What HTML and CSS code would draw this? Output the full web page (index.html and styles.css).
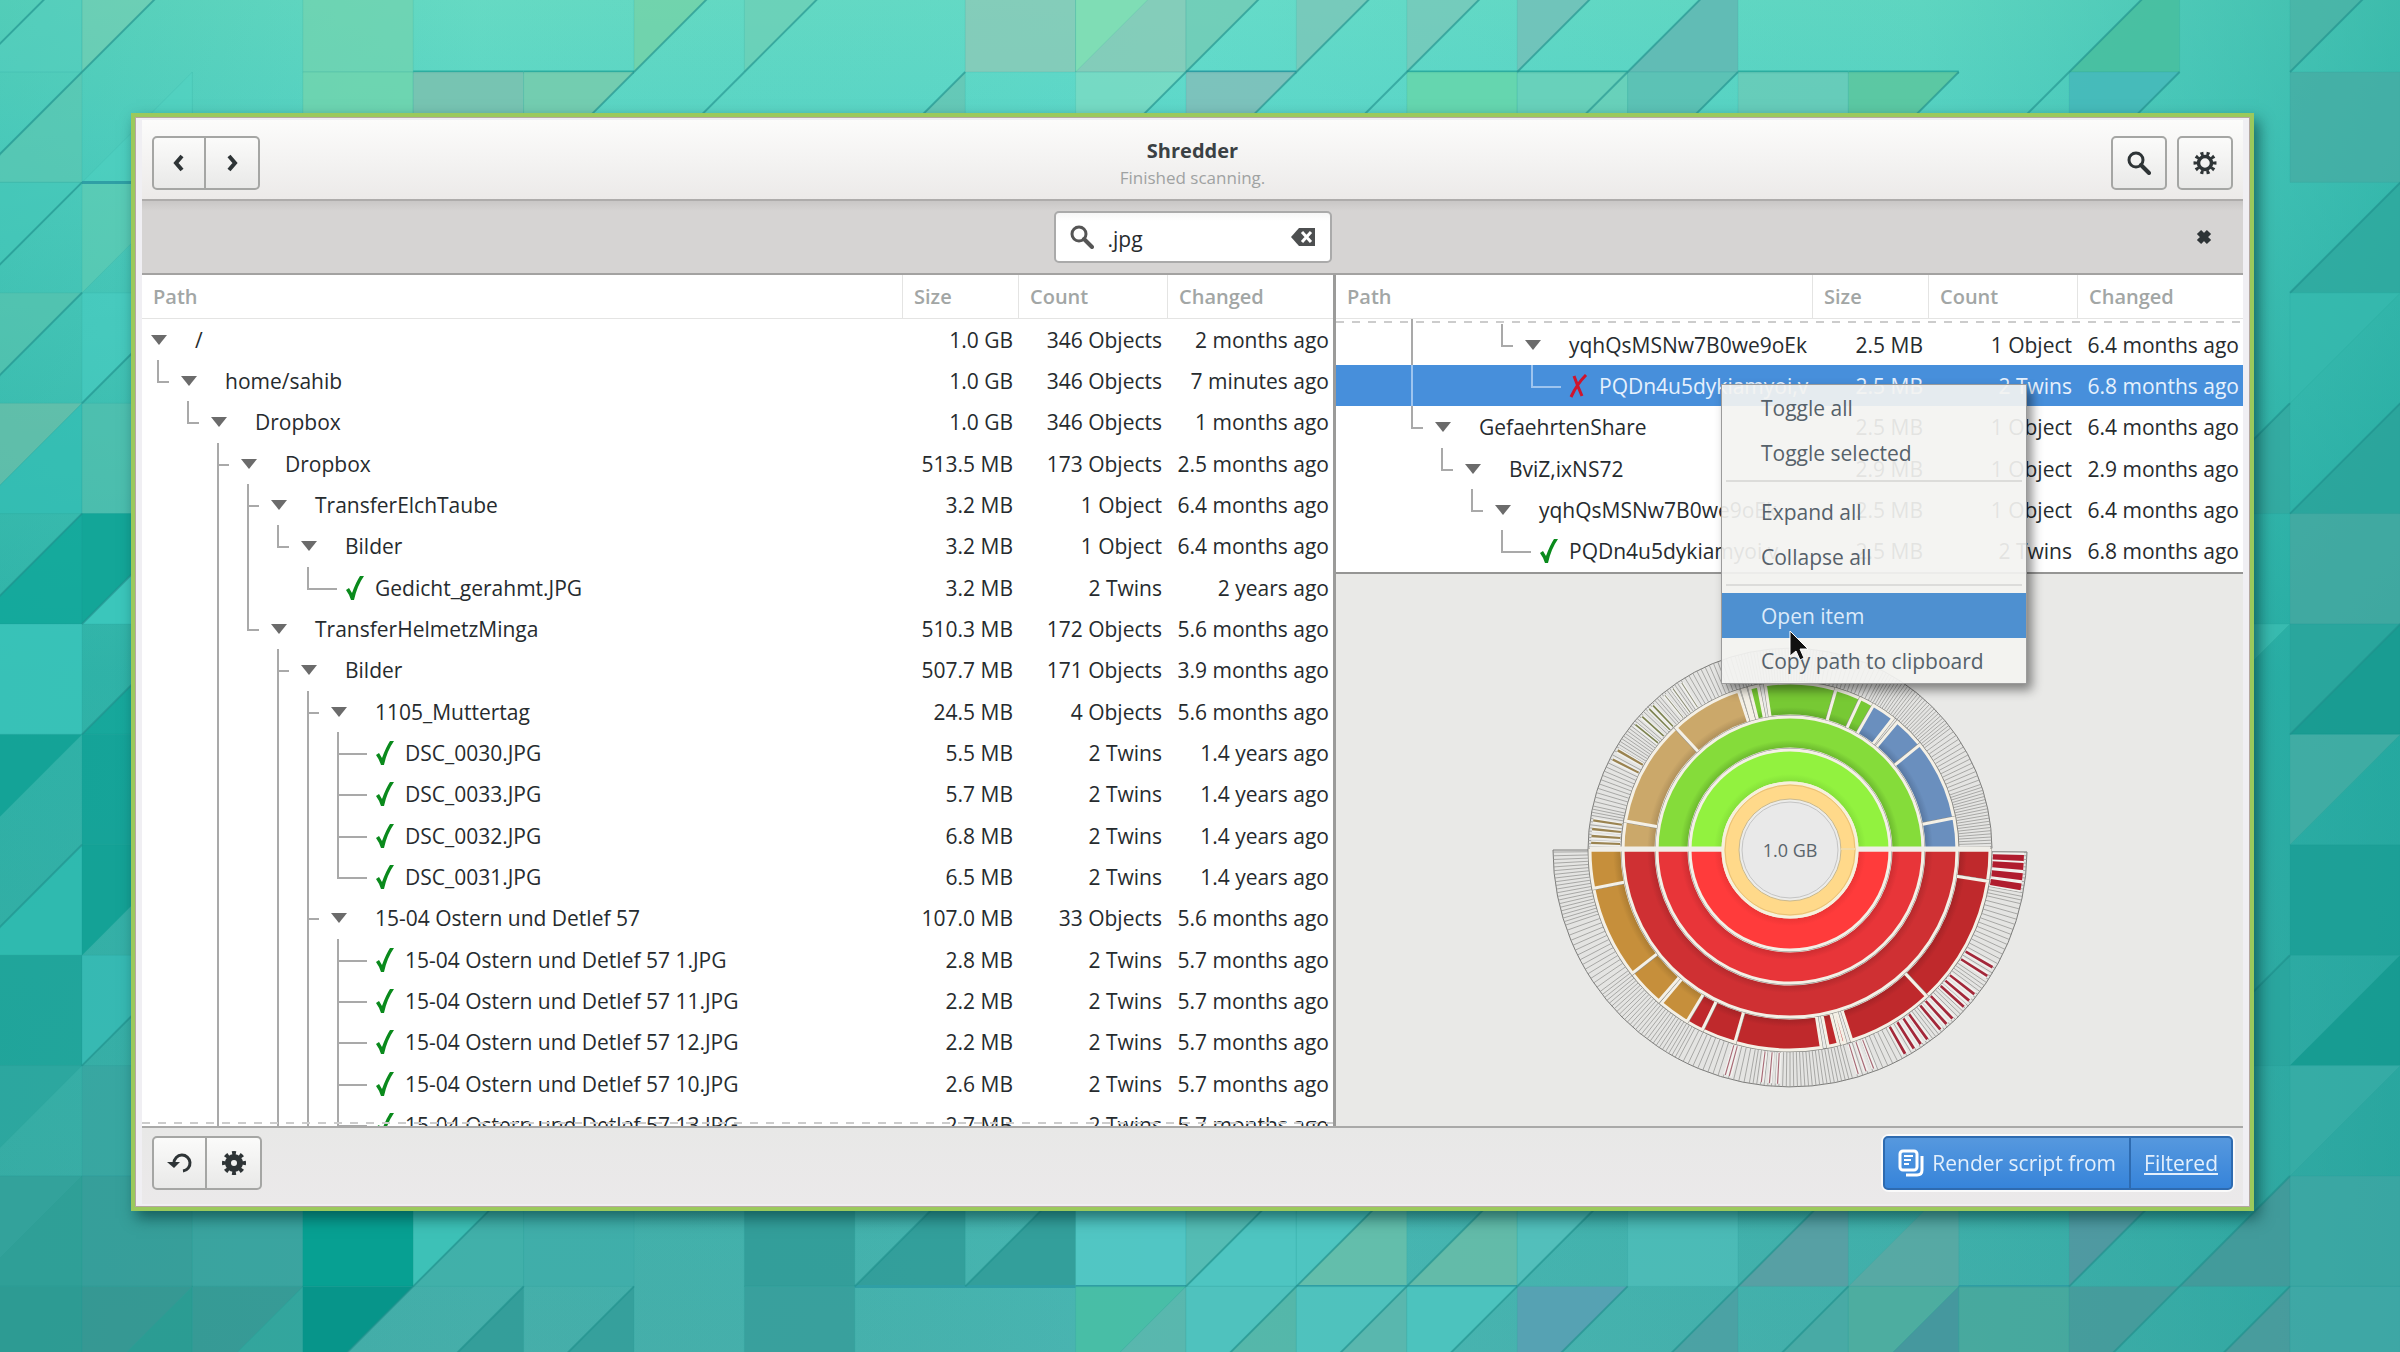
FILE: index.html
```html
<!DOCTYPE html>
<html lang="en">
<head>
<meta charset="UTF-8" />
<meta name="viewport" content="width=device-width, initial-scale=1" />
<title>Shredder</title>
<link rel="stylesheet" href="styles.css">
</head>
<body>

<svg class="wallpaper" id="wallpaper" viewBox="0 0 2400 1352" preserveAspectRatio="xMidYMid slice" aria-hidden="true">
  <defs>
    <linearGradient id="wallBase" x1="0" y1="0" x2="0" y2="1">
      <stop offset="0" stop-color="#6addc6"/>
      <stop offset="0.1" stop-color="#5ed8c8"/>
      <stop offset="0.5" stop-color="#38b8ae"/>
      <stop offset="1" stop-color="#49afab"/>
    </linearGradient>
    <linearGradient id="wallSide" x1="0" y1="0" x2="1" y2="0">
      <stop offset="0" stop-color="#0d9c8e" stop-opacity="0.25"/>
      <stop offset="0.2" stop-color="#0d9c8e" stop-opacity="0.05"/>
      <stop offset="0.5" stop-color="#55d5d5" stop-opacity="0.2"/>
      <stop offset="0.8" stop-color="#1aa8a0" stop-opacity="0.15"/>
      <stop offset="1" stop-color="#109a92" stop-opacity="0.5"/>
    </linearGradient>
  </defs>
  <rect width="2400" height="1352" fill="url(#wallBase)"/>
  <rect width="2400" height="1352" fill="url(#wallSide)"/>
  <g id="tiles"></g>
</svg>

<main class="window">
  <header class="titlebar">
    <div class="linked">
      <button class="btn" aria-label="Back">
        <svg width="24" height="24" viewBox="0 0 24 24"><path d="M15 5 L9 12 L15 19" fill="none" stroke="#2e3436" stroke-width="4"/></svg>
      </button>
      <button class="btn" aria-label="Forward">
        <svg width="24" height="24" viewBox="0 0 24 24"><path d="M9 5 L15 12 L9 19" fill="none" stroke="#2e3436" stroke-width="4"/></svg>
      </button>
    </div>
    <div class="title">
      <h1>Shredder</h1>
      <p>Finished scanning.</p>
    </div>
    <div class="tools">
      <button class="btn" aria-label="Search">
        <svg width="24" height="24" viewBox="0 0 24 24"><circle cx="9" cy="9" r="7" fill="none" stroke="#2e3436" stroke-width="3"/><path d="M14 14 L22 22" stroke="#2e3436" stroke-width="4" stroke-linecap="round"/></svg>
      </button>
      <button class="btn" aria-label="Settings">
        <svg width="24" height="24" viewBox="0 0 24 24"><circle cx="12" cy="12" r="6.5" fill="none" stroke="#2e3436" stroke-width="3.5"/><circle cx="12" cy="12" r="9.5" fill="none" stroke="#2e3436" stroke-width="4" pathLength="120" stroke-dasharray="6 6" stroke-dashoffset="3"/></svg>
      </button>
    </div>
  </header>

  <div class="searchbar">
    <div class="entry">
      <svg width="24" height="24" viewBox="0 0 24 24"><circle cx="9" cy="9" r="7" fill="none" stroke="#555" stroke-width="3"/><path d="M14 14 L22 22" stroke="#555" stroke-width="4" stroke-linecap="round"/></svg>
      <input type="text" value=".jpg" aria-label="Filter">
      <button class="clear" aria-label="Clear">
        <svg width="26" height="20" viewBox="0 0 26 20"><path d="M9 1 H25 V19 H9 L1 10 Z" fill="#4d4f50"/><path d="M12 5 L21 15 M21 5 L12 15" stroke="#fff" stroke-width="3"/></svg>
      </button>
    </div>
    <button class="close" aria-label="Close search">
      <svg width="18" height="18" viewBox="0 0 18 18"><path d="M4 4 L14 14 M14 4 L4 14" stroke="#2e3436" stroke-width="6"/></svg>
    </button>
  </div>

  <div class="panes">
    <section class="pane pane-left">
      <table class="tree">
        <colgroup><col><col class="col-size"><col class="col-count"><col class="col-changed"></colgroup>
        <thead><tr><th>Path</th><th>Size</th><th>Count</th><th>Changed</th></tr></thead>
        <tbody id="files"></tbody>
      </table>
    </section>

    <section class="pane pane-right">
      <div class="twins">
        <table class="tree">
          <colgroup><col><col class="col-size"><col class="col-count"><col class="col-changed"></colgroup>
          <thead><tr><th>Path</th><th>Size</th><th>Count</th><th>Changed</th></tr></thead>
          <tbody class="scrolled"><tr><td colspan="4"><div class="path"><i class="g"></i><i class="g"></i><i class="g v"></i></div></td></tr></tbody>
          <tbody id="twins"></tbody>
        </table>
      </div>
      <div class="chart">
        <svg id="chart" width="480" height="480" viewBox="-240 -240 480 480" role="img" aria-label="Disk usage"></svg>
      </div>

      <div class="menu" role="menu">
        <button role="menuitem">Toggle all</button>
        <button role="menuitem">Toggle selected</button>
        <hr>
        <button role="menuitem">Expand all</button>
        <button role="menuitem">Collapse all</button>
        <hr>
        <button role="menuitem" class="active">Open item</button>
        <button role="menuitem">Copy path to clipboard</button>
        <svg class="cursor" width="22" height="32" viewBox="0 0 22 32"><path d="M1 1 V26 L7 21 L11 30 L15 28 L11 19 L19 19 Z" fill="#111" stroke="#fff" stroke-width="1"/></svg>
      </div>
    </section>
  </div>

  <footer class="actionbar">
    <div class="linked">
      <button class="btn" aria-label="Rescan">
        <svg width="26" height="24" viewBox="0 0 26 24"><path d="M7 12 A8 8 0 1 1 16 20" fill="none" stroke="#2e3436" stroke-width="3"/><path d="M0 11 H13 L7 17 Z" fill="#2e3436"/></svg>
      </button>
      <button class="btn" aria-label="Options">
        <svg width="24" height="24" viewBox="0 0 24 24"><circle cx="12" cy="12" r="6" fill="none" stroke="#2e3436" stroke-width="6"/><circle cx="12" cy="12" r="10" fill="none" stroke="#2e3436" stroke-width="4" pathLength="80" stroke-dasharray="5 5" stroke-dashoffset="2.5"/></svg>
      </button>
    </div>
    <div class="linked suggested">
      <button class="btn">
        <svg width="26" height="28" viewBox="0 0 26 28"><path d="M8 26 H19 Q24 26 24 21 V7" fill="none" stroke="#fff" stroke-width="3"/><rect x="2" y="2" width="17" height="19" rx="3" fill="none" stroke="#fff" stroke-width="3"/><path d="M6 7 H15 M6 11 H13 M6 15 H11" stroke="#fff" stroke-width="2"/></svg>
        Render script from
      </button>
      <button class="btn"><u>Filtered</u></button>
    </div>
  </footer>
</main>

<script src="script.js"></script>
</body>
</html>
```
FILE: styles.css
```css
* {
  box-sizing: border-box;
}
body {
  margin: 0;
  height: 100vh;
  padding: 113px 146px 141px 131px;
  display: flex;
  font-family: "Open Sans", "Noto Sans", sans-serif;
  font-size: 21px;
  line-height: 28px;
  color: #262b2e;
  background: #45b8b0;
}
button, input {
  font: inherit;
  color: inherit;
}
svg {
  display: block;
}
.wallpaper {
  position: fixed;
  inset: 0;
  width: 100%;
  height: 100%;
  z-index: -1;
}

/* window frame */
.window {
  flex: 1;
  min-width: 0;
  display: flex;
  flex-direction: column;
  padding: 3px 7px;
  border: 4px solid #9bc95c;
  background: #f0eff3;
  box-shadow: inset 0 0 0 1px #b5a7a0, 5px 7px 14px rgba(0, 50, 50, 0.6);
}
.titlebar {
  height: 81px;
  display: grid;
  grid-template-columns: 1fr auto 1fr;
  align-items: center;
  padding: 6px 10px 0;
  border-bottom: 2px solid #aeacab;
  background: linear-gradient(#fcfcfb, #eceae9);
}
.title {
  padding-top: 2px;
  text-align: center;
}
.title h1 {
  margin: 0;
  font-size: 20px;
  line-height: 28px;
  color: #3b4144;
}
.title p {
  margin: 0;
  font-size: 17px;
  line-height: 26px;
  color: #9fa2a2;
}
.tools {
  display: flex;
  justify-content: flex-end;
  gap: 10px;
}
.tools .btn {
  width: 56px;
}

/* buttons */
.btn {
  width: 54px;
  height: 54px;
  display: flex;
  align-items: center;
  justify-content: center;
  gap: 8px;
  padding: 0;
  border: 2px solid #a5a6a4;
  border-radius: 5px;
  background: linear-gradient(#fbfbfa, #e9e9e8);
}
.linked {
  display: flex;
}
.linked .btn:first-child {
  border-radius: 5px 0 0 5px;
}
.linked .btn:last-child {
  border-radius: 0 5px 5px 0;
  border-left: 0;
}
.actionbar .btn {
  width: 55px;
}
.suggested {
  border-radius: 6px;
  box-shadow: 0 0 0 2px #fafafa;
}
.suggested .btn {
  width: auto;
  padding: 0 13px;
  border-color: #2e6bb0;
  color: #e3effc;
  background: linear-gradient(#5698de, #3684da);
}

/* search */
.searchbar {
  height: 74px;
  display: grid;
  grid-template-columns: 1fr 278px 1fr;
  align-items: center;
  padding: 0 30px;
  border-bottom: 2px solid #a3a2a1;
  background: linear-gradient(#c9c7c6, #d6d4d3 10px);
}
.entry {
  grid-column: 2;
  height: 52px;
  display: flex;
  align-items: center;
  gap: 12px;
  padding: 0 14px;
  border: 2px solid #aaa;
  border-radius: 5px;
  background: linear-gradient(#f6f6f6, #fff 8px);
}
.entry input {
  flex: 1;
  min-width: 0;
  padding: 4px 0 0 2px;
  border: 0;
  outline: 0;
  background: none;
}
.clear, .close {
  padding: 0;
  border: 0;
  background: none;
}
.close {
  justify-self: end;
}

/* panes */
.panes {
  flex: 1;
  min-height: 0;
  display: grid;
  grid-template-columns: 1191fr 910fr;
  grid-template-rows: minmax(0, 1fr);
}
.pane {
  position: relative;
  min-width: 0;
}
.pane-left {
  overflow: hidden;
  background: #fff;
}
.pane-left::after {
  content: "";
  position: absolute;
  left: 0;
  right: 0;
  bottom: 2px;
  height: 2px;
  background: repeating-linear-gradient(90deg, #ccc 0 8px, transparent 8px 16px);
}
.pane-right {
  display: flex;
  flex-direction: column;
  border-left: 3px solid #9b9b9a;
  background: #e9e9e7;
}
.twins {
  border-bottom: 2px solid #959594;
  background: #fff;
}
.chart {
  flex: 1;
  min-height: 0;
  display: flex;
  align-items: center;
  justify-content: center;
}

/* tree tables */
.tree {
  width: 100%;
  table-layout: fixed;
  border-collapse: separate;
  border-spacing: 0;
}
.col-size {
  width: 116px;
}
.col-count {
  width: 149px;
}
.col-changed {
  width: 165px;
}
.tree th {
  height: 44px;
  padding: 0 11px;
  text-align: left;
  font-size: 20px;
  font-weight: 600;
  color: #a2a6a5;
  border-bottom: 1px solid #e4e4e3;
  border-right: 1px solid #e4e4e3;
}
.tree th:last-child {
  border-right: 0;
}
.tree td {
  height: 41px;
  padding: 0 6px 0 0;
  text-align: right;
  white-space: nowrap;
  overflow: hidden;
}
.tree tr:nth-child(3n) td {
  height: 42px;
}
.tree td:first-child {
  padding: 0 2px 0 1px;
}
.tree td:last-child {
  padding-right: 4px;
}
.path {
  height: 41px;
  display: flex;
  align-items: center;
  overflow: hidden;
}
.tree tr:nth-child(3n) .path {
  height: 42px;
}
.scrolled td, .scrolled .path {
  height: 5px;
}
.scrolled td {
  background: repeating-linear-gradient(90deg, #ccc 0 8px, transparent 8px 16px) 0 2px / 100% 2px no-repeat;
}
.g {
  position: relative;
  flex: none;
  align-self: stretch;
  width: 30px;
}
.v::before, .tee::before, .end::before {
  content: "";
  position: absolute;
  left: 14px;
  top: 0;
  bottom: 0;
  width: 2px;
  background: #a9a9a9;
}
.end::before {
  bottom: 50%;
}
.tee::after, .end::after {
  content: "";
  position: absolute;
  left: 14px;
  top: 50%;
  width: 12px;
  height: 2px;
  background: #a9a9a9;
}
.leaf .tee::after, .leaf .end::after {
  width: 30px;
}
.toggle {
  flex: none;
  width: 52px;
  padding: 0 0 0 8px;
  border: 0;
  background: none;
}
.mark {
  flex: none;
  width: 52px;
  padding-left: 22px;
}
.selected td {
  background: #478fdb;
  color: #e6f1fd;
}
.selected .g::before, .selected .g::after {
  background: #9dc4ef;
}

/* context menu */
.menu {
  position: absolute;
  left: 385px;
  top: 109px;
  width: 306px;
  border: 1px solid #9b9b9b;
  background: rgba(243, 243, 241, 0.92);
  box-shadow: 5px 6px 10px rgba(0, 0, 0, 0.45);
}
.menu button {
  display: block;
  width: 100%;
  height: 45px;
  padding: 0 0 0 39px;
  border: 0;
  text-align: left;
  color: #56616a;
  background: none;
}
.menu hr {
  height: 2px;
  margin: 5px 4px 7px;
  border: 0;
  background: #dcdcda;
}
.menu .active {
  color: #dbeafa;
  background: #4e90d0;
}
.cursor {
  position: absolute;
  left: 67px;
  top: 245px;
}

.actionbar {
  height: 78px;
  display: flex;
  justify-content: space-between;
  align-items: flex-start;
  padding: 8px 10px 0;
  border-top: 2px solid #a9a9a8;
  background: linear-gradient(#e8e8e7, #ebe9ea);
}
```
FILE: script.js
```js
// guides: "|" line through, "+" branch, "L" last branch, " " empty
const files = [
  ["", "dir", "/", "1.0 GB", "346 Objects", "2 months ago"],
  ["L", "dir", "home/sahib", "1.0 GB", "346 Objects", "7 minutes ago"],
  [" L", "dir", "Dropbox", "1.0 GB", "346 Objects", "1 months ago"],
  ["  +", "dir", "Dropbox", "513.5 MB", "173 Objects", "2.5 months ago"],
  ["  |+", "dir", "TransferElchTaube", "3.2 MB", "1 Object", "6.4 months ago"],
  ["  ||L", "dir", "Bilder", "3.2 MB", "1 Object", "6.4 months ago"],
  ["  || L", "keep", "Gedicht_gerahmt.JPG", "3.2 MB", "2 Twins", "2 years ago"],
  ["  |L", "dir", "TransferHelmetzMinga", "510.3 MB", "172 Objects", "5.6 months ago"],
  ["  | +", "dir", "Bilder", "507.7 MB", "171 Objects", "3.9 months ago"],
  ["  | |+", "dir", "1105_Muttertag", "24.5 MB", "4 Objects", "5.6 months ago"],
  ["  | ||+", "keep", "DSC_0030.JPG", "5.5 MB", "2 Twins", "1.4 years ago"],
  ["  | ||+", "keep", "DSC_0033.JPG", "5.7 MB", "2 Twins", "1.4 years ago"],
  ["  | ||+", "keep", "DSC_0032.JPG", "6.8 MB", "2 Twins", "1.4 years ago"],
  ["  | ||L", "keep", "DSC_0031.JPG", "6.5 MB", "2 Twins", "1.4 years ago"],
  ["  | |+", "dir", "15-04 Ostern und Detlef 57", "107.0 MB", "33 Objects", "5.6 months ago"],
  ["  | ||+", "keep", "15-04 Ostern und Detlef 57 1.JPG", "2.8 MB", "2 Twins", "5.7 months ago"],
  ["  | ||+", "keep", "15-04 Ostern und Detlef 57 11.JPG", "2.2 MB", "2 Twins", "5.7 months ago"],
  ["  | ||+", "keep", "15-04 Ostern und Detlef 57 12.JPG", "2.2 MB", "2 Twins", "5.7 months ago"],
  ["  | ||+", "keep", "15-04 Ostern und Detlef 57 10.JPG", "2.6 MB", "2 Twins", "5.7 months ago"],
  ["  | ||+", "keep", "15-04 Ostern und Detlef 57 13.JPG", "2.7 MB", "2 Twins", "5.7 months ago"]
];

const twins = [
  ["  |  L", "dir", "yqhQsMSNw7B0we9oEk", "2.5 MB", "1 Object", "6.4 months ago"],
  ["  |   L", "drop", "PQDn4u5dykiamyoi,v", "2.5 MB", "2 Twins", "6.8 months ago", "selected"],
  ["  L", "dir", "GefaehrtenShare", "2.5 MB", "1 Object", "6.4 months ago"],
  ["   L", "dir", "BviZ,ixNS72", "2.9 MB", "1 Object", "2.9 months ago"],
  ["    L", "dir", "yqhQsMSNw7B0we9oEk", "2.5 MB", "1 Object", "6.4 months ago"],
  ["     L", "keep", "PQDn4u5dykiamyoi,v", "2.5 MB", "2 Twins", "6.8 months ago"]
];

const guideClass = { " ": "g", "|": "g v", "+": "g tee", "L": "g end" };
const marks = {
  dir: '<button class="toggle" aria-label="Collapse"><svg width="16" height="10" viewBox="0 0 16 10"><path d="M0 0 H16 L8 10 Z" fill="#6b6b6b"/></svg></button>',
  keep: '<span class="mark"><svg width="20" height="24" viewBox="0 0 20 24"><path d="M1 14 L4 12 L7 17 Q11 6 15 0 L19 0 Q12 10 9 24 L6 24 Q4 18 1 14 Z" fill="#0a8a1c"/></svg></span>',
  drop: '<span class="mark"><svg width="20" height="24" viewBox="0 0 20 24"><path d="M5 2 Q9 13 13 22 M17 1 Q8 10 2 23" fill="none" stroke="#d0142c" stroke-width="3"/></svg></span>'
};

function fillTree(id, rows) {
  document.getElementById(id).innerHTML = rows.map(([guides, kind, name, size, count, changed, cls]) => {
    const lines = [...guides].map(c => `<i class="${guideClass[c]}"></i>`).join("");
    const leaf = kind === "dir" ? "" : " leaf";
    return `<tr class="${cls || ""}"><td><div class="path${leaf}">${lines}${marks[kind]}<span>${name}</span></div></td>` +
      `<td>${size}</td><td>${count}</td><td>${changed}</td></tr>`;
  }).join("");
}
fillTree("files", files);
fillTree("twins", twins);

// sunburst: angles in degrees, clockwise from the right
function point(r, a) {
  const t = a * Math.PI / 180;
  return (r * Math.cos(t)).toFixed(2) + " " + (r * Math.sin(t)).toFixed(2);
}
function wedge(r0, r1, a0, a1) {
  const large = a1 - a0 > 180 ? 1 : 0;
  return `M${point(r0, a0)} L${point(r1, a0)} A${r1} ${r1} 0 ${large} 1 ${point(r1, a1)} L${point(r0, a1)} A${r0} ${r0} 0 ${large} 0 ${point(r0, a0)} Z`;
}
function segment(r0, r1, a0, a1, fill) {
  const d = wedge(r0, r1, a0, a1);
  return `<path d="${d}" fill="${fill}" stroke="#8b8b86" stroke-width="4"/>` +
    `<path d="${d}" fill="${fill}" stroke="#f4f0e6" stroke-width="3"/>`;
}

const tan = "url(#tan)", green = "url(#green)", blue = "url(#blue)", red = "url(#red)", gold = "url(#gold)";
const upper = [
  [180, 190, tan], [190, 227, tan], [227, 252, tan],
  [253.5, 254.5, green], [256, 259, green], [261.5, 286, green], [286, 295, green], [295, 300, green],
  [300, 308, blue], [310, 321, blue], [321, 349, blue], [349, 360, blue]
];
const lower = [
  [0, 9, red], [9, 47, red], [47, 72, red], [74, 75, red], [76, 79, red],
  [81, 106, red], [106, 116, red], [116, 121, red],
  [121, 130, gold], [131, 142, gold], [142, 169, gold], [169, 180, gold]
];
const bars = [
  [203, 234, "#b01c2e", 1, [2, 4, 6.5, 9]],
  [203, 234, "#a3283a", 0.5, [30, 32.5, 38, 40, 42, 46, 48, 50, 54, 56, 58, 60.5]],
  [203, 234, "#a86a76", 0.3, [69, 71, 73, 93, 95, 97, 105, 106]],
  [170, 199, "#9a8350", 0.5, [182, 184, 186, 188.5, 207, 210]],
  [170, 199, "#7c8250", 0.4, [219, 222, 225, 226.5]],
  [170, 199, "#8f907a", 0.3, [231, 234, 237]]
];

// gradients run along the radius, darker at the inner rim
function ringGradient(id, r0, r1, color, dark) {
  return `<radialGradient id="${id}" gradientUnits="userSpaceOnUse" cx="0" cy="0" r="${r1}">` +
    `<stop offset="${r0 / r1}" stop-color="${dark}"/><stop offset="${(r0 + 9) / r1}" stop-color="${color}"/>` +
    `<stop offset="1" stop-color="${color}"/></radialGradient>`;
}

let svg = "<defs>" +
  ringGradient("lime", 67, 99, "#92f23f", "#82dc38") +
  ringGradient("lime2", 101, 132, "#85dc3a", "#68b32c") +
  ringGradient("scarlet", 67, 99, "#ff3b3b", "#e83434") +
  ringGradient("scarlet2", 101, 132, "#e83539", "#c92c30") +
  ringGradient("scarlet3", 134, 166, "#cf3033", "#b0282b") +
  ringGradient("tan", 134, 166, "#cba86a", "#ab8c58") +
  ringGradient("green", 134, 166, "#77c934", "#5fa52a") +
  ringGradient("blue", 134, 166, "#6a8fbe", "#55749d") +
  ringGradient("red", 168, 200, "#bf292c", "#a02225") +
  ringGradient("gold", 168, 200, "#c68f3b", "#a87930") + "</defs>";

function hairlines(r0, r1, from, to) {
  let d = "";
  let a = from;
  let i = 0;
  while (a < to) {
    d += `M${point(r0, a)} L${point(r1, a)} `;
    a += Math.floor(i / 14) % 3 === 1 ? 1.3 : 0.9;
    i++;
  }
  return `<path d="${wedge(r0, r1, from, to)}" fill="#e4e4e2" stroke="#7c7c7a" stroke-width="1"/>` +
    `<path d="${d}" stroke="#989896" stroke-width="0.8"/>`;
}
svg += hairlines(169, 202, 180, 359.5) + hairlines(202, 237, 0.5, 180);
bars.forEach(([r0, r1, color, half, angles]) => {
  angles.forEach(a => {
    svg += `<path d="${wedge(r0, r1, a - half - 0.3, a + half + 0.3)}" fill="#f1f1ee"/><path d="${wedge(r0, r1, a - half + 0.2, a + half - 0.1)}" fill="${color}"/>`;
  });
});
upper.forEach(([a0, a1, fill]) => { svg += segment(134, 167, a0, a1, fill); });
lower.forEach(([a0, a1, fill]) => { svg += segment(168, 200, a0, a1, fill); });
svg += segment(134, 167, 0, 180, "url(#scarlet3)");
svg += segment(101, 133, 180, 360, "url(#lime2)") + segment(101, 133, 0, 180, "url(#scarlet2)");
svg += segment(67, 100, 180, 360, "url(#lime)") + segment(67, 100, 0, 180, "url(#scarlet)");
svg += '<path d="M67 -1 H200 M-67 -1 H-200" stroke="#f0eee8" stroke-width="5"/>';
svg += '<circle r="67" fill="#ffd98a" stroke="#f6f0dc" stroke-width="3"/><circle r="65" fill="none" stroke="#e8bf74"/>' +
  '<circle r="51" fill="#ececea" stroke="#c9b98f"/><circle r="48" fill="#e9e9e9" stroke="#c4c4c4"/>' +
  '<path d="M51 -1 H65" stroke="#f3dca6" stroke-width="2"/>' +
  '<text y="7" text-anchor="middle" font-size="18" fill="#5a646b">1.0 GB</text>';
document.getElementById("chart").innerHTML = svg;

// wallpaper tiles: [column, row, shape, colour, opacity]
// "a" upper left half, "b" lower right half, "s" square, "e" and "f" bottom edge, "d" diagonal fold
const tiles = [
  [-1, -1, "b", "#57cfc0", .4], [0, -1, "a", "#7fceb0", .5], [2, -1, "s", "#74d3ae", .7], [3, -1, "e"], [4, -1, "e"],
  [5, -1, "a", "#74d2a8", .8], [6, -1, "a", "#72cdb2", .6], [8, -1, "s", "#8cc9b6", .8], [9, -1, "s", "#8cc9b6", .8], [9, -1, "a", "#7ee4b4", .7],
  [10, -1, "a", "#76c9b2", .7], [10, -1, "f"], [11, -1, "a", "#7cc6b8", .8], [12, -1, "a", "#7cc6b8", .7], [12, -1, "e"], [13, -1, "a", "#74bfb8", .8], [13, -1, "e"],
  [14, -1, "b", "#62b9b4", .9], [15, -1, "e"], [16, -1, "e"], [18, -1, "b", "#48bfa0", .9], [20, -1, "a", "#4bb3a6", .8],
  [0, 0, "b", "#50d6c8", .3], [-1, 0, "b", "#5fc6b0", .6], [2, 0, "s", "#72d4ac", .8], [3, 0, "s", "#7ac2b0", .9], [4, 0, "a", "#76ccae", .9],
  [7, 0, "b", "#6bbfae", .6], [9, 0, "a", "#86dcc2", .6], [10, 0, "a", "#80c0ba", .9], [12, 0, "s", "#66d6ac", .9],
  [13, 0, "s", "#6cd0b8", .8], [14, 0, "a", "#5cc0b4", .9], [15, 0, "s", "#6acbb8", .8], [16, 0, "a", "#5cc6a0", .9], [18, 0, "a", "#46b9ba", .9], [20, 0, "s", "#46aca4", .8],
  [-1, 1, "a", "#43c7ba", .5], [0, 1, "a", "#68cdb2", .5], [0, 0, "f"], [-1, 2, "a", "#5cc3ae", .6], [0, 2, "a", "#4ad0c5", .5],
  [-1, 3, "a", "#6fbfa8", .7], [-1, 3, "b", "#33bfb5", .7], [0, 3, "s", "#58bfae", .6], [-1, 4, "b", "#0ea698", .8], [0, 4, "a", "#0fa496", .9], [0, 4, "b", "#3cc8bd", .9],
  [-1, 5, "s", "#3bc5bb", .8], [0, 5, "b", "#12a598", .8], [-1, 6, "a", "#12a296", .9], [0, 6, "s", "#0fa095", .8], [-1, 7, "b", "#2ebdb2", .8], [0, 7, "a", "#0c9f92", .8],
  [-1, 8, "s", "#149f94", .6], [0, 8, "a", "#38beb8", .7], [-1, 9, "a", "#2ba59e", .8], [0, 9, "s", "#38a29e", .6], [-1, 10, "s", "#2d9c94", .8], [-1, 10, "a", "#35a29c", .8],
  [0, 10, "s", "#369b97", .8], [1, 10, "s", "#3aa19e", .8], [2, 10, "s", "#07a092", 1], [3, 10, "a", "#3cc5ba", .8], [3, 10, "b", "#40b0aa", .7], [4, 10, "s", "#3eaeaa", .7],
  [6, 10, "s", "#329c98", .9], [7, 10, "b", "#319c99", .9], [8, 10, "b", "#319c99", .9], [7, 10, "f"], [8, 10, "f"], [9, 10, "s", "#52c8c5", .9], [9, 10, "f"],
  [10, 10, "a", "#58bdb4", .8], [10, 10, "b", "#4fc6c2", .9], [11, 10, "a", "#4fc6c2", .9], [11, 10, "b", "#66bfab", .9], [11, 10, "f"], [12, 10, "b", "#66bba8", .9], [12, 10, "f"],
  [13, 10, "a", "#56c2be", .8], [14, 10, "s", "#50bfbb", .7], [15, 10, "b", "#5a9fa3", .9], [16, 10, "b", "#5ca8a2", .8], [17, 10, "f"], [18, 10, "a", "#5595a0", .8], [19, 10, "b", "#44999a", .9],
  [-1, 11, "s", "#2a978f", .8], [0, 11, "b", "#27998e", .8], [0, 11, "a", "#35938f", .8], [1, 11, "b", "#30a49b", .8], [1, 11, "a", "#33938f", .7], [2, 11, "a", "#07958a", 1], [3, 11, "b", "#309a96", .8], [4, 11, "b", "#329c98", .8],
  [6, 11, "s", "#379f9b", .9], [9, 11, "a", "#48bfa5", .9], [9, 11, "b", "#5cb8ac", .8], [10, 11, "a", "#50c3bf", .9], [10, 11, "b", "#58b8a8", .8], [11, 11, "a", "#50c3bf", .9], [11, 11, "b", "#5eb8ae", .8],
  [12, 11, "a", "#4cc4c0", .9], [13, 11, "a", "#56a2b3", 1], [14, 11, "b", "#4e9fa2", .8], [15, 11, "b", "#4aa9a4", .8], [16, 11, "a", "#50ac9e", .8], [16, 11, "b", "#46969c", .9], [17, 11, "s", "#4ba69a", .7], [18, 11, "a", "#48989a", .8], [19, 11, "b", "#4a9a9c", .9],
  [20, 1, "b", "#2ea79e", .8], [20, 2, "a", "#36b9ae", .8], [20, 3, "b", "#2ba39a", .8], [20, 4, "s", "#4aa79f", .7], [20, 5, "a", "#2aa59c", .9], [20, 5, "b", "#189a90", .9],
  [20, 6, "a", "#46aca4", .8], [20, 7, "s", "#1a9e95", .8], [20, 8, "b", "#159a90", .9], [20, 9, "a", "#38aca6", .8], [19, 3, "b", "#34a79e", .7], [19, 5, "a", "#3fc0b5", .7], [19, 8, "b", "#2aa49c", .7],
  [20, 10, "s", "#40a6a4", .7], [20, 11, "s", "#42a8a6", .8]
];

// folds that cast a thin shadow, as row: columns
const folds = {
  "-1": [-1, 0, 5, 6, 10, 11, 12, 13, 14, 18, 20],
  "0": [-1, 4, 5, 7, 9, 10, 11, 13, 14, 16, 17, 18],
  "1": [-1, 20], "2": [-1, 0], "3": [19, 20], "4": [-1, 0], "5": [0, 20], "7": [-1], "8": [0, 19],
  "10": [3, 7, 8, 10, 11, 12, 13, 15, 18, 19],
  "11": [2, 3, 4, 10, 11, 12, 13, 14, 15, 18, 19]
};
Object.entries(folds).forEach(([row, cols]) => cols.forEach(col => tiles.push([col, +row, "d"])));

const step = 110.4;
document.getElementById("tiles").innerHTML = tiles.map(([col, row, shape, fill, alpha]) => {
  const x = 82 + col * step;
  const y = 72 + row * step;
  const r = x + step;
  const b = y + step;
  if (shape === "e") return `<path d="M${x} ${b} H${r}" stroke="#2fb0a2" stroke-width="3"/>`;
  if (shape === "f") return `<path d="M${x} ${b} H${r}" stroke="#2f9fa5" stroke-width="3"/>`;
  if (shape === "d") return `<path d="M${x} ${b} L${r} ${y}" stroke="#1f8f8c" stroke-opacity="0.6" stroke-width="2"/>`;
  const d = {
    s: `M${x} ${y} H${r} V${b} H${x} Z`,
    a: `M${x} ${y} H${r} L${x} ${b} Z`,
    b: `M${r} ${y} V${b} H${x} Z`
  }[shape];
  return `<path d="${d}" fill="${fill}" fill-opacity="${alpha}" stroke="#1f9c92" stroke-opacity="0.15"/>`;
}).join("");
```
